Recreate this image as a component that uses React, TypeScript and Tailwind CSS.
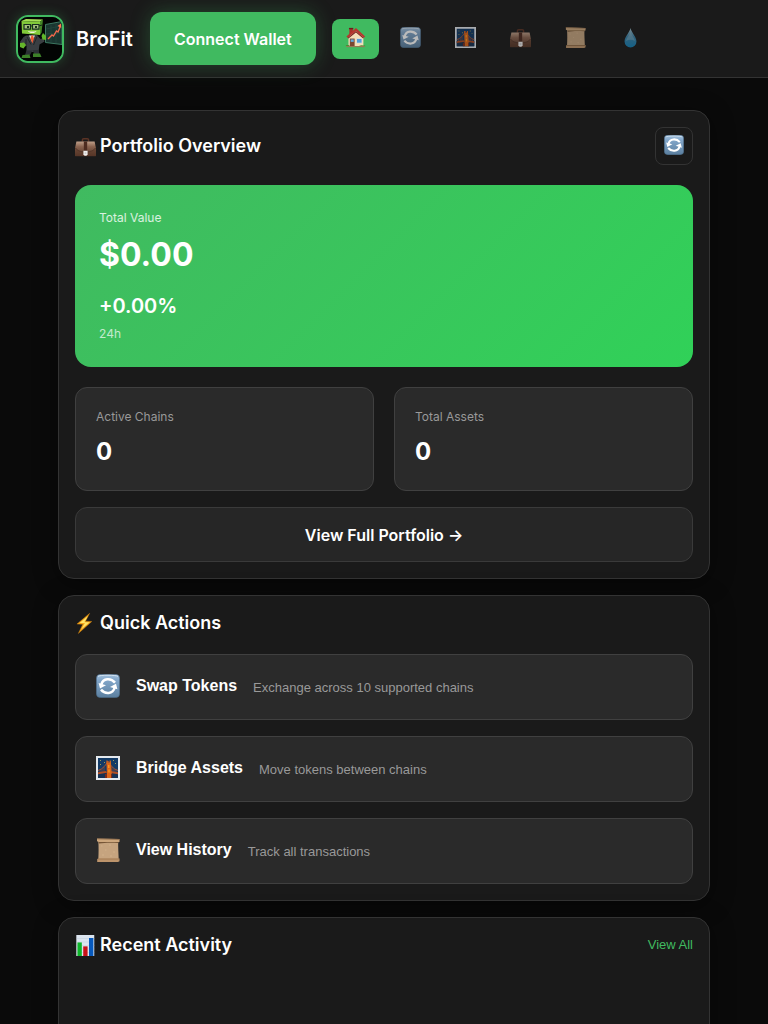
import type { ReactNode } from "react";

type IconProps = { className?: string };

function HouseIcon({ className }: IconProps) {
  return (
    <svg viewBox="0 0 24 24" className={className} aria-hidden="true">
      <path d="M5 1.5h4V8H5z" fill="#a8322a" />
      <path d="M4.5 1h5v1.6h-5z" fill="#6e1f1b" />
      <path d="M4 10.5 13 3l8 7.5V22H4z" fill="#f3dfb8" />
      <path d="M12.5 1.2 23 10.8l-1.6 1.6-8.9-7.7-9.4 7.7L1.6 10.8z" fill="#b8362e" />
      <path d="m12.5 4.7 8.9 7.7-.7.7-8.2-6.9-8.5 6.9-.9-.7z" fill="#7d241e" />
      <path d="M5.5 13.2H11V22H5.5z" fill="#7b4630" />
      <path d="M6.5 14.2H10V17H6.5z" fill="#62a9dc" />
      <path d="M13 13h6.6v5.6H13z" fill="#d3d9dc" />
      <path d="M13.7 13.7h5.2v4.2h-5.2z" fill="#4f9fd8" />
      <path d="M1 21c3-1 4 .3 5 .8h-5zM16 21.8c2-1.6 4-1 7-.6v.8h-7z" fill="#4c8b2d" />
      <path d="M1.5 21.8h21v1.2h-21z" fill="#9a7654" />
    </svg>
  );
}

function SwapIcon({ className }: IconProps) {
  return (
    <svg viewBox="0 0 24 24" className={className} aria-hidden="true">
      <defs>
        <linearGradient id="swap-face" x1="0" y1="0" x2="0" y2="1">
          <stop offset="0" stopColor="#a3c1de" />
          <stop offset="0.25" stopColor="#82a6c9" />
          <stop offset="1" stopColor="#5b7f9f" />
        </linearGradient>
      </defs>
      <rect x="0.4" y="0.4" width="23.2" height="23.2" rx="4" fill="url(#swap-face)" stroke="#4d7191" strokeWidth="0.6" />
      <path d="M2 2.4C4 .8 20 .8 22 2.4" fill="none" stroke="#d9e7f2" strokeWidth="0.9" />
      <path d="M5.4 10.4C7 4.2 14.8 3.6 19 8.6" fill="none" stroke="#fff" strokeWidth="2.5" />
      <path d="M18.6 13.8C17 20 9.2 20.6 5 15.6" fill="none" stroke="#fff" strokeWidth="2.5" />
      <path d="M2.6 9 10 11.2 4 14.4z" fill="#fff" />
      <path d="M21.4 15.2 14 13 20 9.8z" fill="#fff" />
    </svg>
  );
}

function BridgeIcon({ className }: IconProps) {
  return (
    <svg viewBox="0 0 24 24" className={className} aria-hidden="true">
      <rect width="24" height="24" fill="#e4e9ee" />
      <rect x="2" y="2" width="20" height="20" fill="#123a66" />
      <rect x="2" y="16" width="20" height="6" fill="#173152" />
      <path d="M2 14.5C7 13 10 9 12 5c2 4 5 8 10 9.5" fill="none" stroke="#b9562a" strokeWidth="0.9" />
      <path d="M4 14v3M6 13v4M8 11v6M16 11v6M18 13v4M20 14v3" stroke="#8e472e" strokeWidth="0.8" />
      <path d="M2 16.2 10 15l1 1.8-9 1.4zM22 16.2 14 15l-1 1.8 9 1.4z" fill="#b34e22" />
      <path d="M10.4 4.5h1.2v2h2v-2h1.2L16 22h-5z" fill="#dc6518" />
      <path d="M12.2 9h1.2v3h-1.2zM12.4 13.5h1.2v3h-1.2z" fill="#ffa21f" />
      <path d="M9 18h2v4H9zM15 18h1.2v4H15z" fill="#7a2b1a" />
      <path d="M4 4h1v1H4zM8 6h1v1H8zM17 4h1v1h-1zM19 7h1v1h-1zM4 8h1v1H4z" fill="#9a9555" />
    </svg>
  );
}

function BriefcaseIcon({ className }: IconProps) {
  return (
    <svg viewBox="0 0 24 24" className={className} aria-hidden="true">
      <defs>
        <linearGradient id="leather" x1="0" y1="0" x2="0" y2="1">
          <stop offset="0" stopColor="#c0a08a" />
          <stop offset="0.35" stopColor="#8a6450" />
          <stop offset="1" stopColor="#4f3024" />
        </linearGradient>
      </defs>
      <path d="M8.5 6.5V4.4c0-.8.6-1.3 1.4-1.3h4.2c.8 0 1.4.5 1.4 1.3v2.1" fill="none" stroke="#5b3325" strokeWidth="1.7" />
      <path d="M1.6 6.2h20.8L24 14v8.2c0 .6-.5 1-1 1H1c-.5 0-1-.4-1-1V14z" fill="url(#leather)" />
      <path d="M.3 13.6C3 17 6 18.4 9.8 18.4h4.4c3.8 0 6.8-1.4 9.5-4.8l.3 9.2H0z" fill="#5c3a2a" opacity="0.6" />
      <path d="M.4 13.7C4 17.7 7 18 12 18s8-.3 11.6-4.3" fill="none" stroke="#3c2218" strokeWidth="0.6" />
      <path d="M10.1 6.2h3.8V18h-3.8z" fill="#4e2c20" />
      <path d="M9.6 16.8h4.8v4.4L13 22.6h-2l-1.4-1.4z" fill="#f0efee" />
      <path d="M11 18.8h2v1.4h-2z" fill="#bdbdbd" />
    </svg>
  );
}

function ScrollIcon({ className }: IconProps) {
  return (
    <svg viewBox="0 0 24 24" className={className} aria-hidden="true">
      <path d="M2.3 2.5h20c-.4 6 .2 12 .4 19H2.3c.4-7 .4-12 0-19z" fill="#c6a47f" />
      <path d="M2.5 3.5h20l-.2 1.4C14 4.4 9 4.6 3 5.4z" fill="#765637" />
      <path d="M1 .4 23.5 1v2.9H3L1 3.2z" fill="#cda77d" />
      <path d="M1 .4 23.5 1v.7L1 1.2z" fill="#8b6847" />
      <path d="M1.2 21 2.5 20.6h21v2.6L22 24H1.2z" fill="#bd946b" />
      <path d="M2 20.7h21.5v.6H1.4z" fill="#86623f" />
      <path d="M5 8h1.5M13 7h2M9 12h1.5M17 14h2M6 17h2M14 18h2" stroke="#d4b48e" strokeWidth="0.8" />
    </svg>
  );
}

function DropIcon({ className }: IconProps) {
  return (
    <svg viewBox="0 0 24 24" className={className} aria-hidden="true">
      <defs>
        <linearGradient id="water" x1="0" y1="0" x2="0" y2="1">
          <stop offset="0" stopColor="#a9c3cc" />
          <stop offset="0.45" stopColor="#3a82a8" />
          <stop offset="1" stopColor="#147fb4" />
        </linearGradient>
      </defs>
      <path d="M12 1c1 5 6.8 10 6.8 15.6a6.8 6.8 0 0 1-13.6 0C5.2 11 11 6 12 1z" fill="url(#water)" />
      <path d="M12 4c0 5-4.5 7.5-5 12 3-2 7-2 10 0-.5-5-5-7-5-12z" fill="#89b0c2" opacity="0.5" />
    </svg>
  );
}

function BoltIcon({ className }: IconProps) {
  return (
    <svg viewBox="0 0 24 24" className={className} aria-hidden="true">
      <path d="M16.8.4 2.2 12.6l6.7.3L3.8 23.4l15.4-13.7-7.2-.4z" fill="#f4a51a" stroke="#c47a12" strokeWidth="0.5" />
      <path d="M14.8 3.3 5.2 11.4l6.1.1-4 7.1 9.4-7.9-6-.2z" fill="#ffe568" />
    </svg>
  );
}

function ChartIcon({ className }: IconProps) {
  return (
    <svg viewBox="0 0 24 24" className={className} aria-hidden="true">
      <path d="M1.5 0h20.5v24H1.5z" fill="#dce5f0" />
      <path d="M2 4h20M2 8h20M2 12h20M2 16h20M2 20h20" stroke="#bdccdb" strokeWidth="0.5" />
      <path d="M2.8 8.5h5V24h-5z" fill="#0eb52a" />
      <path d="M9.4 13h5v11h-5z" fill="#c91118" />
      <path d="M16 3.4h5V24h-5z" fill="#0759bd" />
    </svg>
  );
}

function Mascot({ className }: IconProps) {
  return (
    <svg viewBox="0 0 44 44" className={className} role="img" aria-label="BroFit mascot">
      <rect width="44" height="44" fill="#020403" />
      <path d="m27.5 7.5 16.5-3v23l-16.5-2z" fill="#1a3630" stroke="#3d7862" strokeWidth="1" />
      <path d="m28 12 15-3M28 17l15-1M33 8v17M38 7v19" fill="none" stroke="#2a4f45" strokeWidth="0.5" />
      <path d="m30 22 3-3 1-1 1.5 1 3-5 1.500 1 2.500-6" fill="none" stroke="#ef684c" strokeWidth="1.4" />
      <path d="m39.500 9 3.500-2.500.2 4.200z" fill="#ff7452" />
      <path d="M3.500 4 8 2l17 .5-3 2.200z" fill="#a4df55" />
      <path d="M3.500 4 22 4.700V18l-18-1.500z" fill="#82c93a" />
      <path d="m22 4.700 3-2.200-1.500 13L22 18z" fill="#438725" />
      <path d="M6 7.500h6.500v4.700H6zM14.500 7.500H21v4.700h-6.500z" fill="#a5bf7c" stroke="#182f20" strokeWidth="1.200" />
      <path d="M12.500 9h2M21 9l3-1" stroke="#142b1b" strokeWidth="1" />
      <path d="M9 9h2v2H9zM17 9h2v2h-2z" fill="#19331a" />
      <path d="M10 14c3 .8 6 .8 8.500 0-1 2.800-7.500 2.800-8.500 0z" fill="#f1f6d8" />
      <path d="m8 18.500 11-.5 3.500 4 3-1 1 3.500-5 3-1 7.500H8.500V29l-5 .5L2 25l3.500-5z" fill="#3a3e42" />
      <path d="m11 18.500 3 6.500 3-6.500z" fill="#dcdcd0" />
      <path d="m13.500 18.500-1 3 2 5 1.400-5-1-3z" fill="#ee562f" />
      <path d="m9 20 4 7.500M19 19.500 15.500 28M8 22v8" fill="none" stroke="#15191b" strokeWidth="0.700" />
      <path d="m2 26 4-.5 2 2.500-2.500 3.500L2 30z" fill="#65b52b" />
      <path d="m23.500 19 1.500-3 3 3v4l-3.500-.5z" fill="#5fb52b" />
      <path d="M8.500 33.500h6L12 38H7zM14.500 33h6l1 4.500h-5z" fill="#2b3034" />
      <path d="m4.500 38 7-.5 1 3.500h-9zM15 36.500h7l1.500 3.500H15z" fill="#3c8028" />
    </svg>
  );
}

const navItems = [
  { label: "Swap", Icon: SwapIcon },
  { label: "Bridge", Icon: BridgeIcon },
  { label: "Portfolio", Icon: BriefcaseIcon },
  { label: "History", Icon: ScrollIcon },
  { label: "Faucet", Icon: DropIcon },
];

const actions = [
  { title: "Swap Tokens", detail: "Exchange across 10 supported chains", Icon: SwapIcon },
  { title: "Bridge Assets", detail: "Move tokens between chains", Icon: BridgeIcon },
  { title: "View History", detail: "Track all transactions", Icon: ScrollIcon },
];

function Card({ children, className = "" }: { children: ReactNode; className?: string }) {
  return (
    <section className={`rounded-2xl border border-[#333333] bg-[#1a1a1a] p-4 shadow-[0_4px_24px_rgba(0,0,0,0.4)] ${className}`}>
      {children}
    </section>
  );
}

function CardTitle({ icon, children }: { icon: ReactNode; children: ReactNode }) {
  return (
    <h2 className="flex items-center gap-1 text-lg leading-[22px] font-semibold">
      {icon}
      {children}
    </h2>
  );
}

function Stat({ label, value }: { label: string; value: string }) {
  return (
    <div className="rounded-xl border border-[#404040] bg-[#2a2a2a] p-5">
      <div className="text-xs leading-[18px] text-[#999999]">{label}</div>
      <div className="mt-2 text-2xl leading-9 font-bold">{value}</div>
    </div>
  );
}

export default function App() {
  return (
    <div className="min-h-screen bg-[#0a0a0a] font-['Inter',sans-serif] text-white">
      <header className="flex items-center gap-4 border-b border-[#333333] bg-[#1a1a1a] px-4 py-3">
        <a href="#home" className="flex items-center gap-3">
          <span className="size-12 overflow-hidden rounded-xl border-2 border-[#40ba60] shadow-[0_0_12px_rgba(64,186,96,0.3)]">
            <Mascot className="size-full" />
          </span>
          <span className="w-[58px] text-xl font-semibold">BroFit</span>
        </a>
        <button
          type="button"
          className="h-[53px] rounded-xl bg-[#40ba60] px-6 text-base font-semibold whitespace-nowrap shadow-[0_0_20px_rgba(64,186,96,0.3)]"
        >
          Connect Wallet
        </button>
        <nav aria-label="Main" className="flex gap-2">
          <button type="button" aria-label="Home" className="flex h-10 w-[47px] items-center justify-center rounded-lg bg-[#40ba60] pb-0.5">
            <HouseIcon className="size-[21px]" />
          </button>
          {navItems.map(({ label, Icon }) => (
            <button key={label} type="button" aria-label={label} className="flex h-10 w-[47px] items-center justify-center rounded-lg pb-0.5">
              <Icon className="size-[21px] opacity-70" />
            </button>
          ))}
        </nav>
      </header>

      <main className="mx-auto flex max-w-[700px] flex-col gap-4 px-6 py-8">
        <Card>
          <div className="flex items-center justify-between">
            <CardTitle icon={<BriefcaseIcon className="size-[21px]" />}>Portfolio Overview</CardTitle>
            <button
              type="button"
              aria-label="Refresh"
              className="flex size-[38px] items-center justify-center rounded-lg border border-[#333333] pb-0.5"
            >
              <SwapIcon className="size-5" />
            </button>
          </div>

          <div className="mt-5 rounded-2xl bg-linear-135 from-[#40ba60] to-[#30d158] p-6">
            <div className="text-xs leading-[18px] text-white/80">Total Value</div>
            <div className="mt-1 text-[32px] leading-[48px] font-bold">$0.00</div>
            <div className="mt-3 text-xl leading-[30px] font-semibold">+0.00%</div>
            <div className="mt-1 text-xs leading-[18px] text-white/70">24h</div>
          </div>

          <div className="mt-5 grid grid-cols-2 gap-5">
            <Stat label="Active Chains" value="0" />
            <Stat label="Total Assets" value="0" />
          </div>

          <button
            type="button"
            className="mt-4 h-[55px] w-full rounded-xl border border-[#3a3a3a] bg-[#262626] text-base font-semibold"
          >
            View Full Portfolio →
          </button>
        </Card>

        <Card>
          <CardTitle icon={<BoltIcon className="size-[21px]" />}>Quick Actions</CardTitle>
          <div className="mt-5 flex flex-col gap-4">
            {actions.map(({ title, detail, Icon }) => (
              <button
                key={title}
                type="button"
                className="flex h-[66px] items-center gap-4 rounded-xl border border-[#404040] bg-[#2a2a2a] px-5 pb-0.5 text-left font-['Liberation_Sans',Arial,sans-serif]"
              >
                <Icon className="size-6" />
                <span className="flex items-end gap-4">
                  <span className="text-base leading-6 font-bold">{title}</span>
                  <span className="text-[13px] leading-5 text-[#999999]">{detail}</span>
                </span>
              </button>
            ))}
          </div>
        </Card>

        <Card className="min-h-[240px]">
          <div className="flex items-center justify-between">
            <CardTitle icon={<ChartIcon className="size-[21px]" />}>Recent Activity</CardTitle>
            <a href="#history" className="font-['Liberation_Sans',Arial,sans-serif] text-[13px] leading-5 text-[#40ba60]">
              View All
            </a>
          </div>
        </Card>
      </main>
    </div>
  );
}
